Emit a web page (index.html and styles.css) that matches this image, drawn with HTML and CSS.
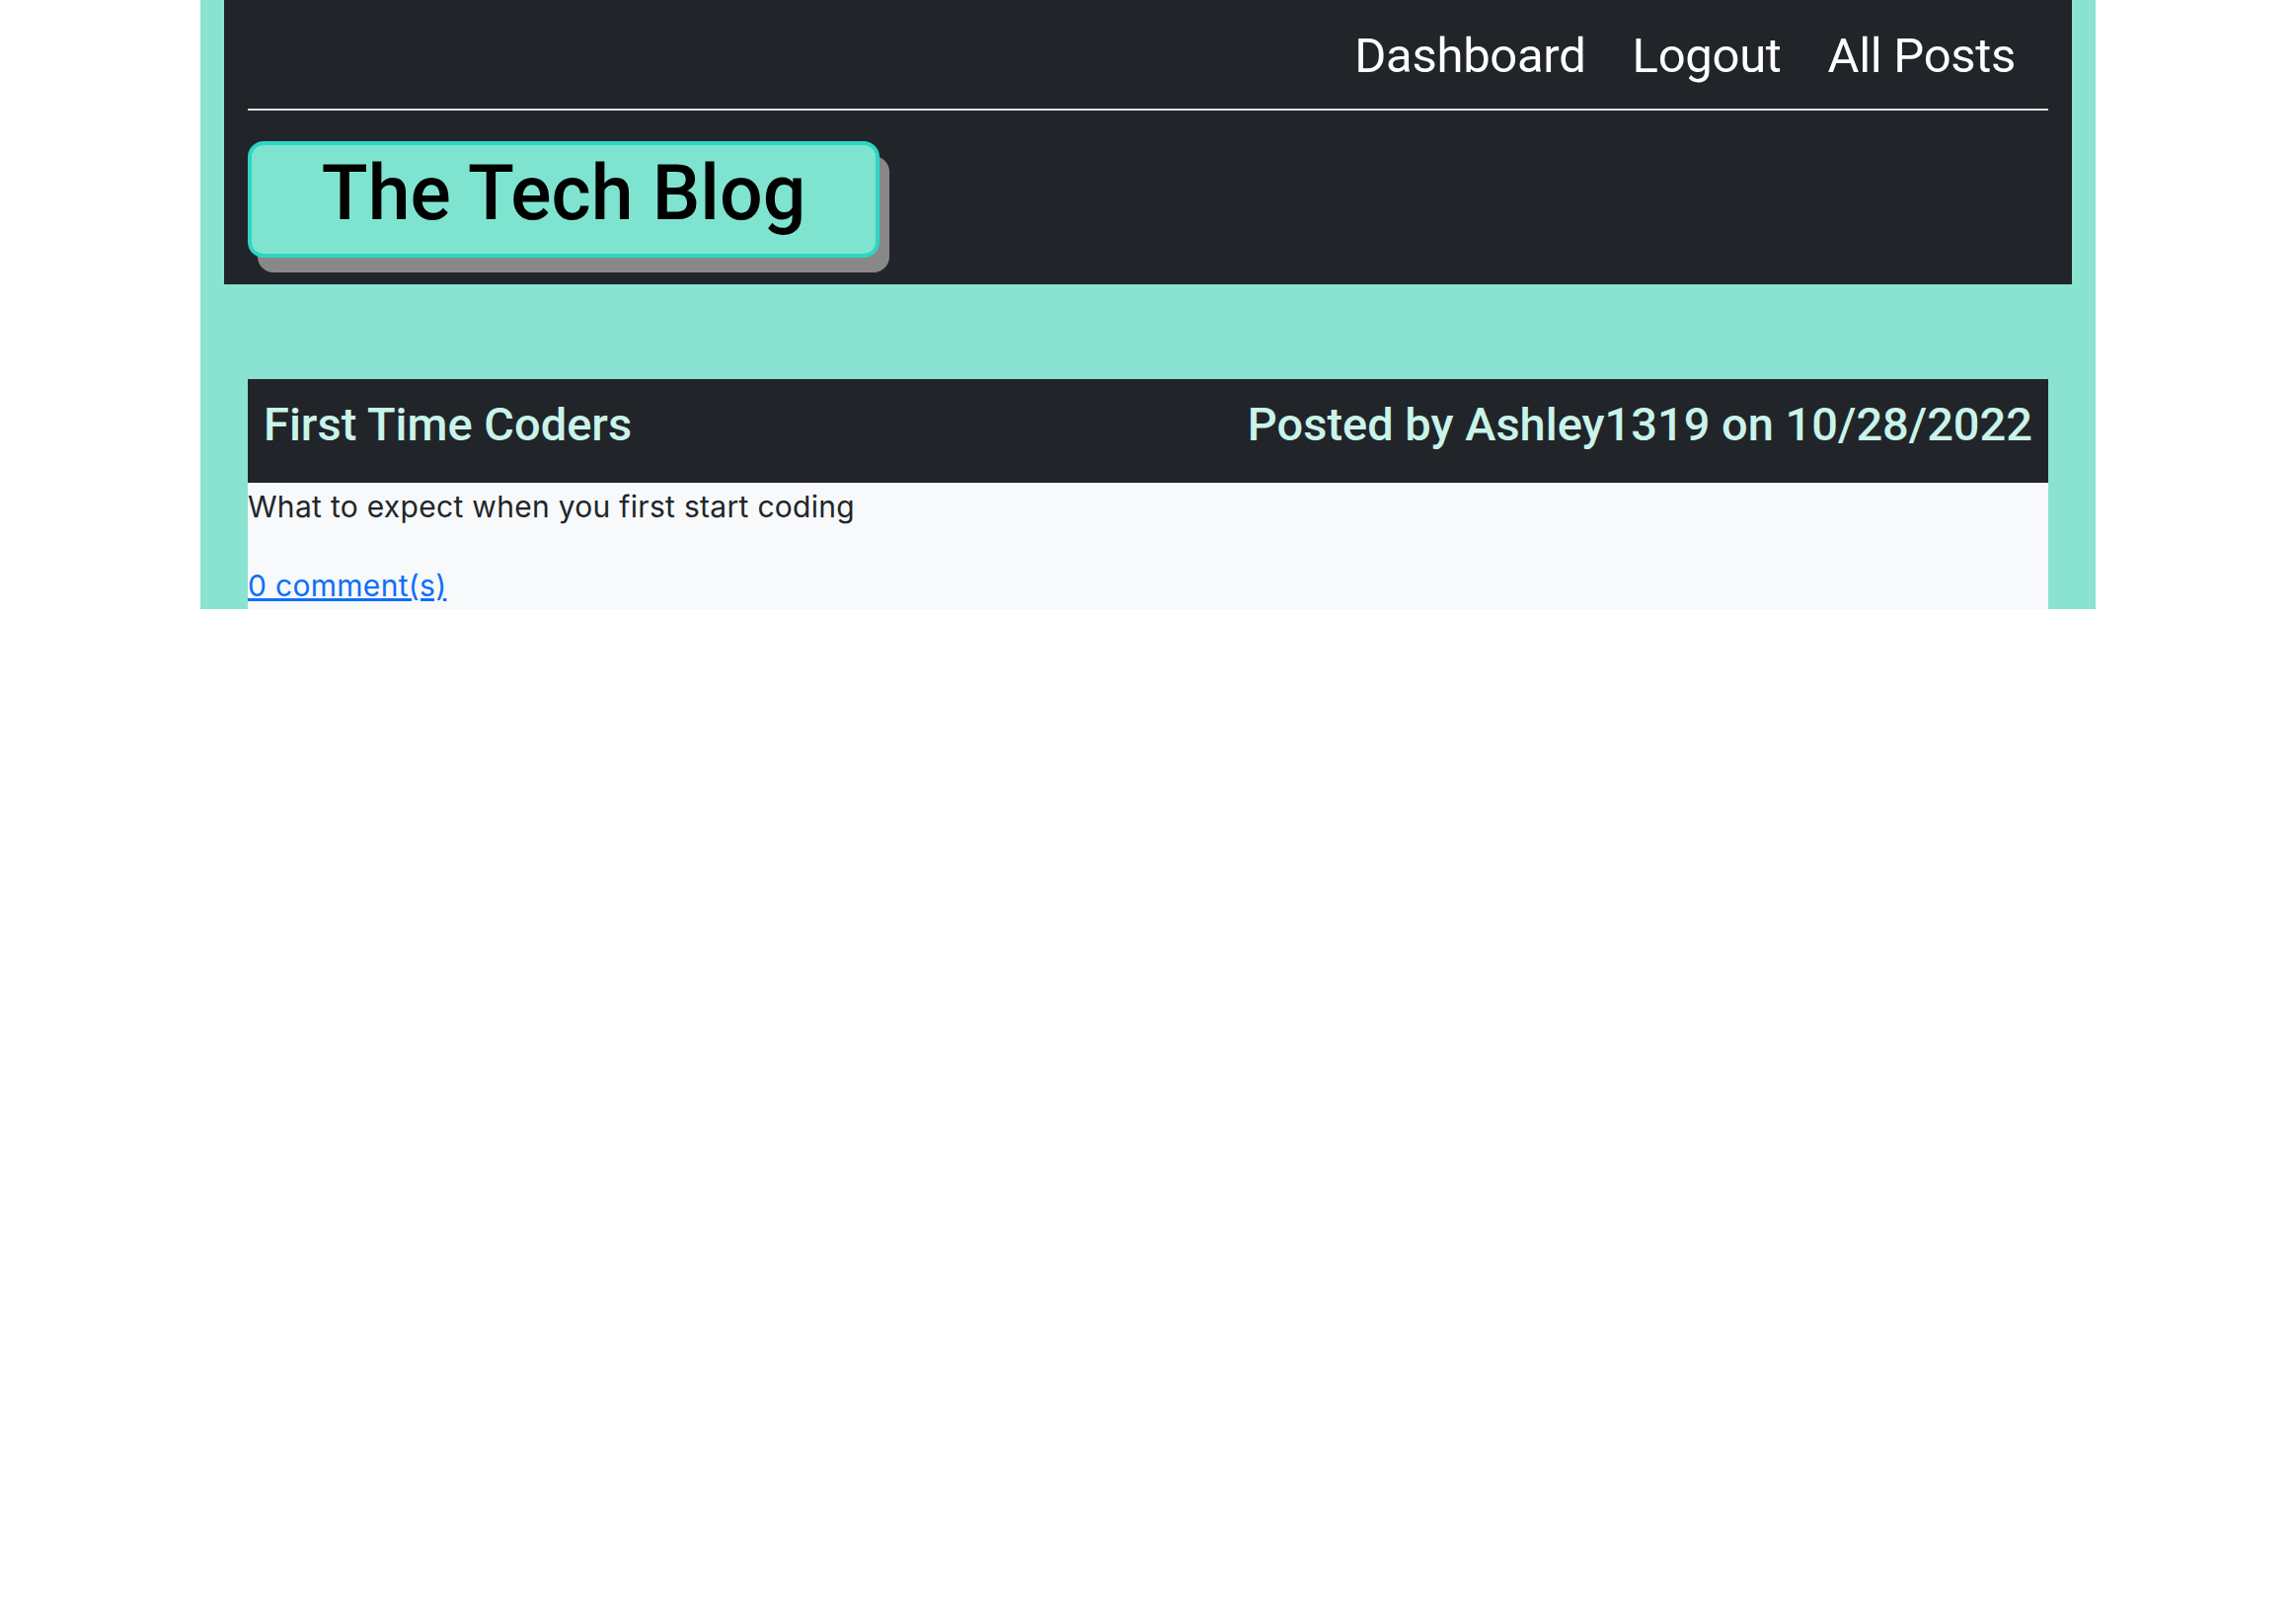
FILE: index.html
```html
<!DOCTYPE html>
<html lang="en">
<head>
<meta charset="utf-8">
<title>The Tech Blog</title>
<link rel="stylesheet" href="styles.css">
</head>
<body>
<div class="page">
  <header class="site-header">
    <nav class="nav">
      <a class="nav-link" href="#">Dashboard</a>
      <a class="nav-link" href="#">Logout</a>
      <a class="nav-link" href="#">All Posts</a>
    </nav>
    <hr class="rule">
    <div class="brand"><h1 class="brand-title">The Tech Blog</h1></div>
  </header>
  <main class="main">
    <article class="post">
      <div class="post-header">
        <h3 class="post-title">First Time Coders</h3>
        <h3 class="post-meta">Posted by Ashley1319 on 10/28/2022</h3>
      </div>
      <div class="post-body">
        <p class="post-text">What to expect when you first start coding</p>
        <a class="post-link" href="#">0 comment(s)</a>
      </div>
    </article>
  </main>
</div>
</body>
</html>
```

FILE: styles.css
```css
* { box-sizing: border-box; }
html, body { margin: 0; padding: 0; background: #ffffff; }
body { font-family: Roboto, "Liberation Sans", Arial, sans-serif; color: #212529; }

.page {
  width: 1920px;
  margin: 0 auto;
  background: #8ae3d1;
  padding: 0 24px;
}

.site-header {
  background: #212529;
  padding: 27px 24px 27px;
}

.nav {
  display: flex;
  justify-content: flex-end;
  gap: 47px;
  padding-right: 33px;
}
.nav-link {
  color: #ffffff;
  text-decoration: none;
  font-size: 49px;
  line-height: 60px;
  letter-spacing: -0.3px;
  font-weight: 400;
}

.rule {
  margin: 23px 0 0;
  border: 0;
  border-top: 2px solid #dee2e6;
  height: 0;
}

.brand {
  margin-top: 31px;
  width: 640px;
  height: 118px;
  background: #7fe4cf;
  border: 4px solid #2dd6c3;
  border-radius: 16px;
  box-shadow: 10px 15px 0 #888888;
  padding-bottom: 11px;
  text-align: center;
}
.brand-title {
  margin: 0;
  font-size: 77px;
  line-height: 99px;
  font-weight: 500;
  color: #000000;
}

.main { padding: 96px 24px 0; }

.post-header {
  display: flex;
  justify-content: space-between;
  align-items: flex-start;
  height: 105px;
  background: #212529;
  padding: 17px 16px 0 16px;
}
.post-title, .post-meta {
  margin: 0;
  font-size: 47px;
  line-height: 57.6px;
  font-weight: 500;
  color: #c9f4ea;
}

.post-body {
  background: #f8f9fa;
  padding-top: 3px;
  height: 128px;
  font-family: Inter, Roboto, "Liberation Sans", Arial, sans-serif;
  font-size: 30px;
  line-height: 42px;
  letter-spacing: 0.01em;
}
.post-text { margin: 0 0 38px; }
.post-link { color: #0d6efd; text-decoration: underline; }
```
